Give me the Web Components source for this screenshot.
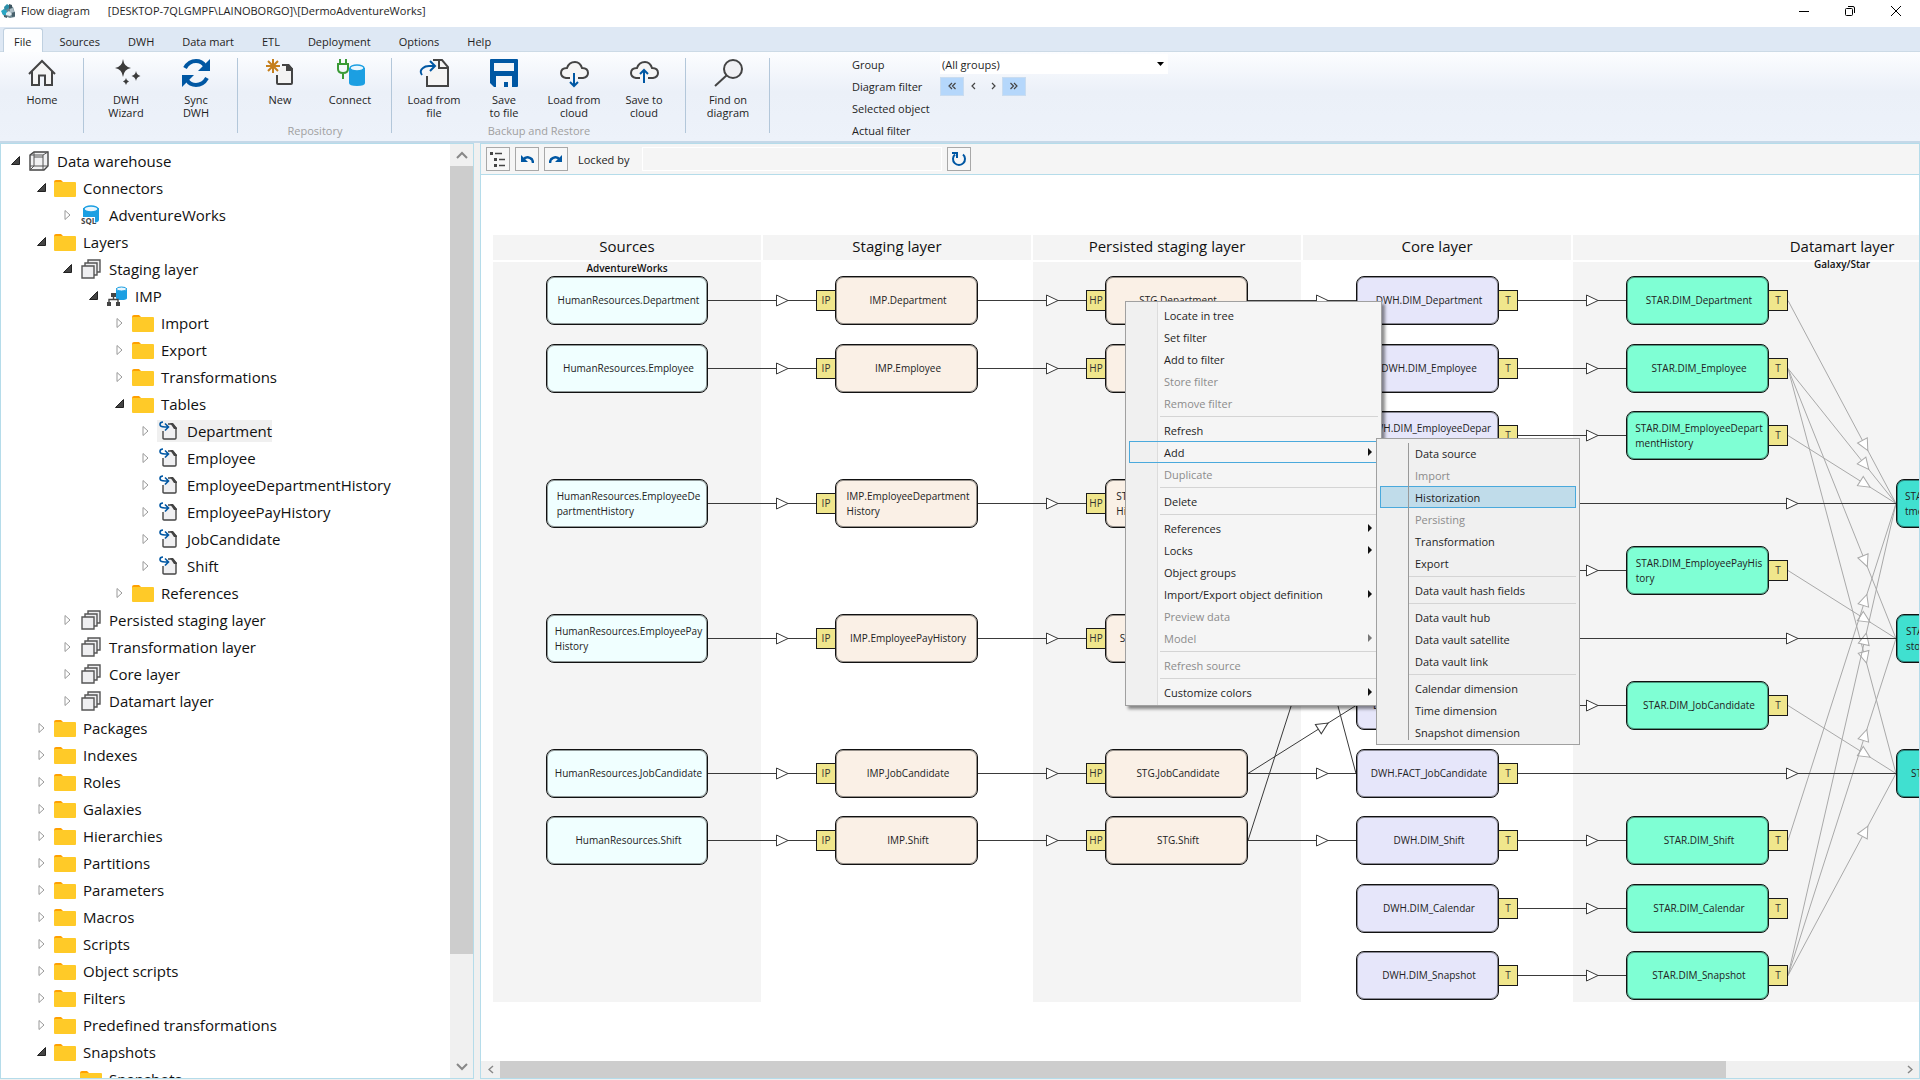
<!DOCTYPE html>
<html lang="en">
<head>
<meta charset="utf-8">
<title>Flow diagram</title>
<style>
  html, body { margin: 0; height: 100%; }
  body {
    font-family: "Open Sans", "Noto Sans", sans-serif;
    font-size: 11px;
    color: #1e1e1e;
    background: #fff;
    overflow: hidden;
    --edge: #b5dcea;
  }
</style>
</head>
<body>
<flow-app></flow-app>

<script>
const svg = (w, h, body, box) =>
  `<svg width="${w}" height="${h}" viewBox="${box || `0 0 ${w} ${h}`}" fill="none" aria-hidden="true">${body}</svg>`;

const ICONS = {
  app: svg(16, 16, `<path d="M4 4l4-2 4 2 2 6v4l-5 1-6-2-2-3z" fill="#6f8993"/><path d="M0 8l3-2 3 2v4l-4 0z" fill="#2aa7c4"/><path d="M3 4l3-3 3 2-2 3-3 1z" fill="#2c8fa9"/><path d="M8 1l3 1v3l-3 1z" fill="#3e5661"/><path d="M9 6l3-1 1 4-4 1z" fill="#aebfc7"/><path d="M5 10l3-2 3 3-2 2-4-1z" fill="#e3edf1"/><path d="M11 10l3-1v4l-3 1z" fill="#47606b"/><path d="M3 12l3 1v2l-3-1z" fill="#47606b"/>`),
  home: svg(30, 30, `<path d="M5 13v14h7v-9h6v9h7V13L15 3z" fill="#f5f5f5"/><path d="M2 16L15 3l13 13" stroke="#444" stroke-width="2"/><path d="M5 13v14h7v-9.500h6V27h7V13" stroke="#444" stroke-width="2"/>`),
  wizard: svg(30, 30, `<path d="M12 1q1 8 8 9-7 1-8 9-1-8-8-9 7-1 8-9zM25 13q.6 4 4.500 5-4 1-4.500 5-.6-4-4.500-5 4-1 4.500-5zM15 20q.5 3 3 3.500-2.500.5-3 3.500-.5-3-3-3.500 2.500-.5 3-3.500z" fill="#3b3b3b"/>`),
  sync: svg(30, 30, `<path d="M4 10Q8 3 15 3q6 0 9 5" stroke="#0057a3" stroke-width="4"/><path d="M29 1v12H17z" fill="#0057a3"/><path d="M26 20q-4 7-11 7-6 0-9-5" stroke="#0057a3" stroke-width="4"/><path d="M1 29V17h12z" fill="#0057a3"/>`),
  create: svg(30, 30, `<path d="M8 1v14M1 8h14M3 3l10 10M13 3L3 13" stroke="#c57f1c" stroke-width="2"/><path d="M17 7h7l3 4v15H12V17" fill="#f3f3f3"/><path d="M17 7h6l4 4v14q0 1-1 1H13q-1 0-1-1v-8" stroke="#444" stroke-width="2"/><path d="M21 6h3l4 5v2h-7z" fill="#444"/>`),
  connect: svg(30, 30, `<path d="M5 1v5M11 1v5M2 6h12M3 7v4q0 4 5 4t5-4V7M8 15v6" stroke="#3a9a36" stroke-width="2"/><path d="M14 10v15q0 3 8 3t8-3V10z" fill="#1c9fe2"/><ellipse cx="22" cy="10" rx="7" ry="3" fill="#e9f6fd" stroke="#1c9fe2" stroke-width="1.500"/>`),
  load: svg(30, 30, `<path d="M15 2h8l6 7v19H8V16" fill="#f5f5f5"/><path d="M14 2h9l6 7v19H8V18M20 2v8h8" stroke="#444" stroke-width="2"/><path d="M3 17Q0 13 4 10q2-2 6-2h6M11 3l5 5-5 5" stroke="#0057a3" stroke-width="2"/>`),
  save: svg(30, 30, `<path d="M2 1h26q1 0 1 1v26q0 1-1 1H5l-4-4V2q0-1 1-1z" fill="#0057a3"/><path d="M5 5h20v8H5zM7 18h16v11h-4v-5h-4v5H7z" fill="#f4f6fa"/>`),
  cloudDown: svg(30, 30, `<path d="M7 20q-5-1-5-5 0-5 6-5 2-6 8-6 6 0 7 6 6 0 6 5 0 4-5 5" fill="#f5f5f5"/><path d="M11 20H7q-5-1-5-5 0-5 6-5 2-6 8-6 5 0 7 6 6 0 6 5 0 4-5 5h-5" stroke="#444" stroke-width="2"/><path d="M15 15v13M11 24l4 4 4-4" stroke="#0057a3" stroke-width="2"/>`),
  cloudUp: svg(30, 30, `<path d="M7 20q-5-1-5-5 0-5 6-5 2-6 8-6 6 0 7 6 6 0 6 5 0 4-5 5" fill="#f5f5f5"/><path d="M11 20H7q-5-1-5-5 0-5 6-5 2-6 8-6 5 0 7 6 6 0 6 5 0 4-5 5h-5" stroke="#444" stroke-width="2"/><path d="M15 25V12M11 16l4-4 4 4" stroke="#0057a3" stroke-width="2"/>`),
  find: svg(30, 30, `<circle cx="20" cy="11" r="9" fill="#f0f0f3" stroke="#444" stroke-width="2"/><path d="M14 17L2 28" stroke="#444" stroke-width="2"/>`),
  cube: svg(20, 20, `<path d="M1 4l4-3h14v14l-4 4H1z" fill="#f1f1f2" stroke="#444" stroke-width="1.400"/><path d="M1 4h13v15M14 4l5-3M5 1v14H1M5 15h10l4 0M5 15l-4 4M5 6h9" stroke="#555" stroke-width="1"/>`),
  folder: svg(22, 18, `<path d="M0 3q0-2 2-2h5l2 2h11v4H0z" fill="#ffa000"/><rect y="3" width="22" height="15" rx="1" fill="#ffca28"/>`),
  sql: svg(20, 20, `<path d="M2 3v12q0 3 8 3t8-3V3z" fill="#1c9fe2"/><ellipse cx="10" cy="4" rx="7" ry="3" fill="#eaf6fd" stroke="#1c9fe2" stroke-width="1.400"/><path d="M0 12h14v8H0z" fill="#fff"/><text x="0" y="19" font-family="Open Sans" font-size="8" font-weight="700" fill="#444">SQL</text>`),
  layers: svg(20, 20, `<g fill="#efeff1" stroke="#555" stroke-width="1.400"><path d="M7 1h12v12H7z"/><path d="M4 4h12v12H4z"/><path d="M1 7h12v12H1z"/></g>`),
  imp: svg(20, 20, `<path d="M9 2v10q0 2 5.500 2t5.500-2V2z" fill="#1c9fe2"/><ellipse cx="14.500" cy="3" rx="5" ry="2" fill="#eaf6fd" stroke="#1c9fe2"/><path d="M4 7h5v4H4zM0 16h4v4H0zM9 16h4v4H9z" fill="#444"/><path d="M6.500 10v3.500M2 17v-3.500h9V17" stroke="#444" stroke-width="1.400"/>`),
  table: svg(20, 20, `<path d="M10 3h4l3 3v12H4V10" fill="#f0f0f2"/><path d="M9 3h4l4 4v10q0 1-1 1H5q-1 0-1-1v-7" stroke="#444" stroke-width="1.400"/><path d="M11 2h3l4 5v1h-3z" fill="#444"/><path d="M4 1Q1 1 1 3.500 1 6 6 6h3M6 2.500L9.500 6 6 9.500" stroke="#0057a3" stroke-width="1.600"/>`),
  list: svg(16, 16, `<path d="M0 1h3v3H0zM4 7h3v3H4zM4 13h3v3H4z" fill="#444"/><path d="M5 2.500h7M9 8.500h6M9 14.500h6" stroke="#444" stroke-width="1.400"/>`),
  undo: svg(14, 10, `<path d="M3 6q3-4 7-2 3 1 3 5" stroke="#0057a3" stroke-width="2.400"/><path d="M1 1v7h7z" fill="#0057a3"/>`),
  redo: svg(14, 10, `<path d="M11 6Q8 2 4 4 1 5 1 9" stroke="#0057a3" stroke-width="2.400"/><path d="M13 1v7H6z" fill="#0057a3"/>`),
  refresh: svg(16, 16, `<path d="M12 3.500a6 6 0 1 1-8 0" stroke="#0057a3" stroke-width="2"/><path d="M1 2h5v5" stroke="#0057a3" stroke-width="2"/>`),
  open: svg(9, 9, `<path d="M8.500.5v8H.5z" fill="#444" stroke="#222"/>`),
  closed: svg(7, 12, `<path d="M1 1.500v9L6 6z" stroke="#999"/>`),
  up: svg(12, 8, `<path d="M1 7l5-5 5 5" stroke="#888" stroke-width="2"/>`),
  down: svg(12, 8, `<path d="M1 1l5 5 5-5" stroke="#888" stroke-width="2"/>`),
  left: svg(6, 9, `<path d="M5 1L1 4.500 5 8" stroke="#888" stroke-width="1.500"/>`),
  right: svg(6, 9, `<path d="M1 1l4 3.500L1 8" stroke="#888" stroke-width="1.500"/>`),
  min: svg(12, 12, `<path d="M1 6.500h10" stroke="#000"/>`),
  restore: svg(12, 12, `<rect x="1.500" y="3.500" width="7" height="7" rx="1" stroke="#000"/><path d="M4 1.500h5q1.500 0 1.500 1.500v5" stroke="#000"/>`),
  close: svg(12, 12, `<path d="M1 1l10 10M11 1L1 11" stroke="#000"/>`)
};

const BUTTON_RESET = `button { margin: 0; padding: 0; border: 0; background: none; font: inherit; color: inherit; }`;

/* Base class: renders the styles and the markup of a component into an open shadow root. */
class Part extends HTMLElement {
  connectedCallback() {
    if (this.shadowRoot) return;
    this.attachShadow({ mode: "open" }).innerHTML =
      `<style>*{box-sizing:border-box}svg{display:block}${this.css()}</style>${this.html()}`;
  }
  css() { return ":host{display:block}"; }
  html() { return "<slot></slot>"; }
}

customElements.define("title-bar", class extends Part {
  css() { return `${BUTTON_RESET}
    :host { display: flex; align-items: center; height: 27px; padding: 0 1px 6px 0; box-sizing: border-box; }
    .logo { margin: 0 4px 0 1px; }
    .path { margin-left: 18px; flex: 1; }
    button { width: 46px; display: flex; justify-content: center; }`; }
  html() { return `<span class="logo">${ICONS.app}</span><span>Flow diagram</span>
    <span class="path">[DESKTOP-7QLGMPF\\LAINOBORGO]\\[DermoAdventureWorks]</span>
    <button aria-label="Minimize">${ICONS.min}</button><button aria-label="Restore">${ICONS.restore}</button><button aria-label="Close">${ICONS.close}</button>`; }
});

customElements.define("ribbon-tabs", class extends Part {
  css() { return `${BUTTON_RESET}
    :host { display: flex; height: 25px; padding: 1px 3px 0; background: #dee8f4; border-bottom: 1px solid #ccdae6; box-sizing: border-box; }
    button { height: 24px; padding: 2px 13px 0; border: 1px solid transparent; border-bottom: 0; border-radius: 3px 3px 0 0; }
    button[aria-selected=true] { background: #fdfeff; border-color: #bfd0e0; padding: 2px 11px 0 10px; margin-right: 2px; }`; }
  html() { return ["File", "Sources", "DWH", "Data mart", "ETL", "Deployment", "Options", "Help"]
    .map((t, i) => `<button role="tab" aria-selected="${i === 0}">${t}</button>`).join(""); }
});

customElements.define("ribbon-button", class extends Part {
  css() { return `${BUTTON_RESET}
    :host { display: block; width: 70px; }
    button { width: 100%; display: flex; flex-direction: column; align-items: center; gap: 5px; line-height: 13px; }`; }
  html() { return `<button>${ICONS[this.getAttribute("icon")]}<span><slot></slot></span></button>`; }
});

customElements.define("ribbon-group", class extends Part {
  css() { return `
    :host { display: flex; flex-direction: column; justify-content: space-between; height: 75px; padding: 0 6px 0 7px; border-right: 1px solid #b3c7da; box-sizing: border-box; }
    .items { display: flex; }
    .name { text-align: center; color: #a0a0a0; line-height: 12px; margin-bottom: -4px; }`; }
  html() { const n = this.getAttribute("name");
    return `<div class="items"><slot></slot></div>${n ? `<div class="name">${n}</div>` : ""}`; }
});

customElements.define("filter-panel", class extends Part {
  css() { return `${BUTTON_RESET}
    :host { display: grid; grid-template-columns: 88px 228px; grid-auto-rows: 22px; align-items: center; margin-left: 82px; }
    .combo { position: relative; height: 20px; }
    select { display: block; width: 100%; height: 20px; border: 0; padding: 0 2px; background: #fff; font: inherit; color: inherit; appearance: none; }
    .combo svg { position: absolute; right: 4px; top: 8px; }
    .nav { display: flex; height: 19px; }
    .nav button { width: 19px; display: flex; align-items: center; justify-content: center; }
    .nav button.end { width: 24px; background: #b5d7fb; border: 1px solid #c9dcf0; }`; }
  html() {
    const chev = d => svg(8, 8, `<path d="${d}" stroke="#444" stroke-width="1.200"/>`);
    return `<label for="g">Group</label>
    <div class="combo"><select id="g"><option>(All groups)</option></select>${svg(7, 4, `<path d="M0 0h7L3.500 4z" fill="#000"/>`)}</div>
    <span>Diagram filter</span>
    <div class="nav"><button class="end" aria-label="First">${chev("M4 1L1 4l3 3M7.500 1l-3 3 3 3")}</button><button aria-label="Previous">${chev("M5 1L2 4l3 3")}</button><button aria-label="Next">${chev("M3 1l3 3-3 3")}</button><button class="end" aria-label="Last">${chev("M.5 1l3 3-3 3M4 1l3 3-3 3")}</button></div>
    <span>Selected object</span><span></span><span>Actual filter</span><span></span>`; }
});

customElements.define("app-ribbon", class extends Part {
  css() { return `
    :host { display: flex; align-items: flex-start; height: 91px; padding: 6px 0 0; background: linear-gradient(#fcfdff, #ebf0f8 45%, #edf2fa); border-bottom: 2px solid #c5d8e8; box-sizing: border-box; }
    filter-panel { margin-top: -5px; }`; }
  html() { return `
    <ribbon-group><ribbon-button icon="home">Home</ribbon-button></ribbon-group>
    <ribbon-group><ribbon-button icon="wizard">DWH<br>Wizard</ribbon-button><ribbon-button icon="sync">Sync<br>DWH</ribbon-button></ribbon-group>
    <ribbon-group name="Repository"><ribbon-button icon="create">New</ribbon-button><ribbon-button icon="connect">Connect</ribbon-button></ribbon-group>
    <ribbon-group name="Backup and Restore"><ribbon-button icon="load">Load from<br>file</ribbon-button><ribbon-button icon="save">Save<br>to file</ribbon-button><ribbon-button icon="cloudDown">Load from<br>cloud</ribbon-button><ribbon-button icon="cloudUp">Save to<br>cloud</ribbon-button></ribbon-group>
    <ribbon-group><ribbon-button icon="find">Find on<br>diagram</ribbon-button></ribbon-group>
    <filter-panel></filter-panel>`; }
});

customElements.define("scroll-bar", class extends Part {
  css() { return `${BUTTON_RESET}
    :host { display: flex; background: #f0f0f0; flex: none; }
    :host([vertical]) { flex-direction: column; width: 23px; }
    :host(:not([vertical])) { height: 17px; }
    button { flex: none; display: flex; align-items: center; justify-content: center; }
    :host([vertical]) button { height: 22px; }
    :host(:not([vertical])) button { width: 19px; }
    .thumb { background: #cdcdcd; flex: var(--thumb) 1 0; }
    .rest { flex: calc(100 - var(--thumb)) 1 0; }`; }
  html() { const v = this.hasAttribute("vertical");
    return `<button aria-label="Back">${v ? ICONS.up : ICONS.left}</button><div class="thumb"></div><div class="rest"></div><button aria-label="Forward">${v ? ICONS.down : ICONS.right}</button>`; }
});

customElements.define("tree-row", class extends Part {
  css() { return `${BUTTON_RESET}
    :host { display: flex; align-items: center; height: 27px; font-size: 15px; padding-left: calc(10px + 26px * var(--level)); color: #111; }
    .toggle { width: 9px; display: flex; justify-content: center; margin-right: 7px; }
    .item { display: flex; align-items: center; height: 22px; line-height: 20px; }
    .icon { width: 24px; margin-right: 6px; display: flex; justify-content: center; }
    :host([selected]) .item { background: #f0f0f0; }`; }
  html() { const state = this.getAttribute("state");
    return `<button class="toggle" aria-label="Toggle">${state === "none" ? "" : ICONS[state]}</button>
    <button class="item"><span class="icon">${ICONS[this.getAttribute("icon")]}</span><slot></slot></button>`; }
});

const TREE = [
  [0, "open", "cube", "Data warehouse"], [1, "open", "folder", "Connectors"], [2, "closed", "sql", "AdventureWorks"],
  [1, "open", "folder", "Layers"], [2, "open", "layers", "Staging layer"], [3, "open", "imp", "IMP"],
  [4, "closed", "folder", "Import"], [4, "closed", "folder", "Export"], [4, "closed", "folder", "Transformations"], [4, "open", "folder", "Tables"],
  ...["Department", "Employee", "EmployeeDepartmentHistory", "EmployeePayHistory", "JobCandidate", "Shift"].map(t => [5, "closed", "table", t]),
  [4, "closed", "folder", "References"],
  ...["Persisted staging layer", "Transformation layer", "Core layer", "Datamart layer"].map(t => [2, "closed", "layers", t]),
  ...["Packages", "Indexes", "Roles", "Galaxies", "Hierarchies", "Partitions", "Parameters", "Macros", "Scripts", "Object scripts", "Filters", "Predefined transformations"].map(t => [1, "closed", "folder", t]),
  [1, "open", "folder", "Snapshots"], [2, "none", "folder", "Snapshots"]
];

customElements.define("tree-panel", class extends Part {
  css() { return `
    :host { display: flex; width: 474px; flex: none; border: 1px solid var(--edge); background: #fff; overflow: hidden; min-height: 0; box-sizing: border-box; }
    .rows { flex: 1; padding-top: 3px; overflow: hidden; }
    scroll-bar { --thumb: 88.5; }`; }
  html() { return `<div class="rows">${TREE.map(([l, s, i, t]) =>
    `<tree-row style="--level:${l}" state="${s}" icon="${i}"${t === "Department" ? " selected" : ""}>${t}</tree-row>`).join("")}</div><scroll-bar vertical></scroll-bar>`; }
});

customElements.define("diagram-toolbar", class extends Part {
  css() { return `${BUTTON_RESET}
    :host { display: flex; align-items: center; height: 31px; padding-left: 5px; gap: 5px; background: #f5f5f5; border-bottom: 1px solid var(--edge); flex: none; box-sizing: border-box; }
    button { width: 24px; height: 24px; border: 1px solid #a8a8a8; background: #f7f7f7; display: flex; align-items: center; justify-content: center; }
    label { margin: 0 5px; width: 54px; white-space: nowrap; }
    input { width: 300px; height: 24px; border: 1px solid #fff; background: #f5f5f5; font: inherit; margin: 0; }`; }
  html() { return `<button aria-label="Outline">${ICONS.list}</button><button aria-label="Undo">${ICONS.undo}</button><button aria-label="Redo">${ICONS.redo}</button>
    <label for="lock">Locked by</label><input id="lock"><button aria-label="Refresh">${ICONS.refresh}</button>`; }
});

customElements.define("diagram-column", class extends Part {
  css() { return `
    :host { display: flex; flex-direction: column; gap: 2px; flex: none; width: 268px; text-align: center; }
    :host([wide]) { width: 538px; }
    header { height: 25px; line-height: 22px; font-size: 15px; background: #f4f4f4; color: #111; }
    section { min-height: 740px; font-size: 10px; font-weight: 600; line-height: 12px; color: #111; }
    :host([shaded]) section { background: #f4f4f4; }`; }
  html() { return `<header>${this.getAttribute("name")}</header><section><slot></slot></section>`; }
});

customElements.define("flow-node", class extends Part {
  css() { return `
    :host { position: absolute; width: 143px; height: 49px; padding-left: 3px; background: var(--fill); border: 1px solid #111; box-shadow: inset 0 0 0 1px rgba(0,0,0,.4); border-radius: 8px; display: flex; align-items: center; justify-content: center; font-size: 10px; line-height: 15px; color: #222; box-sizing: border-box; }
    :host([kind=source]) { width: 162px; }
    span { white-space: pre; }`; }
  html() { return `<span><slot></slot></span>`; }
});

customElements.define("flow-port", class extends Part {
  css() { return `:host { position: absolute; width: 20px; height: 21px; border: 1px solid #1a1a1a; background: #f0e68c; font-size: 10px; line-height: 19px; text-align: center; color: #333; box-sizing: border-box; }`; }
});

/* Diagram geometry: nodes sit on a grid of rows, one column of nodes per layer. */
const rowY = r => Math.round(125 + 67.5 * r);
const COLS = {
  source: { x: 65, fill: "#f0ffff" },
  stage: { x: 354, fill: "#faf0e6", port: "IP", portX: 335 },
  persist: { x: 624, fill: "#faf0e6", port: "HP", portX: 605 },
  core: { x: 875, fill: "#e6e6fa", port: "T", portX: 1017 },
  star: { x: 1145, fill: "#7fffd4", port: "T", portX: 1287 },
  fact: { x: 1415, fill: "#40e0d0" }
};
const NODES = {
  source: { 0: "HumanResources.Department", 1: "HumanResources.Employee", 3: "HumanResources.EmployeeDe\npartmentHistory", 5: "HumanResources.EmployeePay\nHistory", 7: "HumanResources.JobCandidate", 8: "HumanResources.Shift" },
  stage: { 0: "IMP.Department", 1: "IMP.Employee", 3: "IMP.EmployeeDepartment\nHistory", 5: "IMP.EmployeePayHistory", 7: "IMP.JobCandidate", 8: "IMP.Shift" },
  persist: { 0: "STG.Department", 1: "STG.Employee", 3: "STG.EmployeeDepartment\nHistory", 5: "STG.EmployeePayHistory", 7: "STG.JobCandidate", 8: "STG.Shift" },
  core: { 0: "DWH.DIM_Department", 1: "DWH.DIM_Employee", 2: "DWH.DIM_EmployeeDepar\ntmentHistory", 6: "DWH.DIM_JobCandidate", 7: "DWH.FACT_JobCandidate", 8: "DWH.DIM_Shift", 9: "DWH.DIM_Calendar", 10: "DWH.DIM_Snapshot" },
  star: { 0: "STAR.DIM_Department", 1: "STAR.DIM_Employee", 2: "STAR.DIM_EmployeeDepart\nmentHistory", 4: "STAR.DIM_EmployeePayHis\ntory", 6: "STAR.DIM_JobCandidate", 8: "STAR.DIM_Shift", 9: "STAR.DIM_Calendar", 10: "STAR.DIM_Snapshot" },
  fact: { 3: "STAR.FACT_EmployeeDepar\ntmentHistory", 5: "STAR.FACT_EmployeePayHi\nstory", 7: "STAR.FACT_JobCandidate" }
};
/* Each link: x1, row1, x2, row2, x of the arrow. */
const LINKS = [
  ...[0, 1, 3, 5, 7, 8].flatMap(r => [[227, r, 335, r, 301], [497, r, 605, r, 571], [767, r, 875, r, 841]]),
  ...[0, 1, 2, 4, 6, 8, 9, 10].map(r => [1037, r, 1145, r, 1111]),
  ...[3, 5, 7].map(r => [1037, r, 1415, r, 1311]),
  [767, 7, 875, 6, 842], [767, 8, 875, 3, 842], [767, 1, 875, 7, 842]
];
const REFS = [[0, 3], [1, 3], [1, 5], [1, 7], [2, 3], [4, 5], [6, 7], [8, 3], [10, 3], [10, 5], [10, 7]]
  .map(([a, b]) => [1307, a, 1415, b, 1384]);

const link = ([x1, r1, x2, r2, ax]) => {
  const y1 = rowY(r1), y2 = rowY(r2);
  const ay = y1 + (y2 - y1) * (ax - x1) / (x2 - x1);
  const angle = Math.atan2(y2 - y1, x2 - x1) * 180 / Math.PI;
  return `<path d="M${x1} ${y1 + .5}L${x2} ${y2 + .5}"/><path d="M-5.500-5.500L6 0l-11.500 5.500z" fill="#fff" transform="translate(${ax} ${ay + .5}) rotate(${angle})"/>`;
};

customElements.define("flow-canvas", class extends Part {
  css() { return `
    :host { display: block; position: relative; flex: 1; min-height: 0; overflow: hidden; background: #fff; }
    .columns { display: flex; gap: 2px; padding: 60px 0 0 12px; }
    .links { position: absolute; inset: 0; }`; }
  html() {
    const nodes = Object.entries(NODES).map(([k, rows]) => {
      const c = COLS[k];
      return Object.entries(rows).map(([r, t]) =>
        `<flow-node kind="${k}" style="left:${c.x}px;top:${rowY(r) - 24}px;--fill:${c.fill}">${t}</flow-node>` +
        (c.port ? `<flow-port style="left:${c.portX}px;top:${rowY(r) - 10}px">${c.port}</flow-port>` : "")).join("");
    }).join("");
    return `<div class="columns">
      <diagram-column name="Sources" shaded>AdventureWorks</diagram-column>
      <diagram-column name="Staging layer"></diagram-column>
      <diagram-column name="Persisted staging layer" shaded></diagram-column>
      <diagram-column name="Core layer"></diagram-column>
      <diagram-column name="Datamart layer" shaded wide><div style="margin-top:-4px">Galaxy/Star</div></diagram-column></div>
      <svg class="links" width="1500" height="900" fill="none"><g stroke="#a9a9a9">${REFS.map(link).join("")}</g><g stroke="#3a3a3a">${LINKS.map(link).join("")}</g></svg>${nodes}`;
  }
});

customElements.define("menu-item", class extends Part {
  css() { return `${BUTTON_RESET}
    :host { display: block; margin: 0 3px; }
    button { width: 100%; height: 22px; display: flex; align-items: center; justify-content: space-between; padding: 0 5px 0 var(--indent); border: 1px solid transparent; white-space: nowrap; text-align: left; }
    button:disabled { color: #8c8c8c; }
    :host([open]) button { border-color: #4aa9dc; }
    :host([active]) button { border-color: #4aa9dc; background: #c0dcea; }`; }
  html() { return `<button role="menuitem"${this.hasAttribute("off") ? " disabled" : ""}><slot></slot>${this.hasAttribute("more")
    ? svg(4, 8, `<path d="M0 0v8l4-4z" fill="${this.hasAttribute("off") ? "#777" : "#111"}"/>`) : ""}</button>`; }
});

customElements.define("popup-menu", class extends Part {
  css() { return `
    :host { position: absolute; display: block; width: 257px; padding: 2px 0; border: 1px solid #a0a0a0; background: linear-gradient(90deg, #f0f0f0 31px, #dcdcdc 31px, #dcdcdc 32px, #f5f5f5 32px); box-shadow: 3px 3px 3px rgba(0,0,0,.45); --indent: 34px; --rule: 34px; box-sizing: border-box; }
    :host([sub]) { width: 204px; padding: 3px 0 1px; background: #f0f0f0; box-shadow: none; --rule: 32px; }
    :host([sub])::before { content: ""; position: absolute; z-index: 1; left: 31px; top: 4px; bottom: 4px; width: 1px; background: #999; }
    hr { height: 5px; margin: 0 3px 0 var(--rule); border: 0; background: linear-gradient(#d4d4d4, #d4d4d4) 0 2px / 100% 1px no-repeat; }`; }
  html() {
    const data = this.hasAttribute("sub")
      ? ["Data source", "Import|off", "Historization|active", "Persisting|off", "Transformation", "Export", "-", "Data vault hash fields", "-", "Data vault hub", "Data vault satellite", "Data vault link", "-", "Calendar dimension", "Time dimension", "Snapshot dimension"]
      : ["Locate in tree", "Set filter", "Add to filter", "Store filter|off", "Remove filter|off", "-", "Refresh", "Add|open more", "Duplicate|off", "-", "Delete", "-", "References|more", "Locks|more", "Object groups", "Import/Export object definition|more", "Preview data|off", "Model|off more", "-", "Refresh source|off", "-", "Customize colors|more"];
    return data.map(d => { const [t, a = ""] = d.split("|"); return d === "-" ? "<hr>" : `<menu-item ${a}>${t}</menu-item>`; }).join("");
  }
});

customElements.define("diagram-panel", class extends Part {
  css() { return `
    :host { display: flex; flex-direction: column; flex: 1; min-width: 0; min-height: 0; border: 1px solid var(--edge); position: relative; box-sizing: border-box; }
    scroll-bar { --thumb: 87.6; }
    popup-menu { left: 644px; top: 157px; }
    popup-menu[sub] { left: 895px; top: 294px; }`; }
  html() { return `<diagram-toolbar></diagram-toolbar><flow-canvas></flow-canvas><scroll-bar></scroll-bar>
    <popup-menu></popup-menu><popup-menu sub></popup-menu>`; }
});

customElements.define("flow-app", class extends Part {
  css() { return `
    :host { display: flex; flex-direction: column; height: 100vh; }
    main { display: flex; gap: 6px; flex: 1; min-height: 0; background: #f0f0f0; padding-bottom: 1px; }`; }
  html() { return `<title-bar></title-bar><ribbon-tabs></ribbon-tabs><app-ribbon></app-ribbon>
    <main><tree-panel></tree-panel><diagram-panel></diagram-panel></main>`; }
});
</script>
</body>
</html>
